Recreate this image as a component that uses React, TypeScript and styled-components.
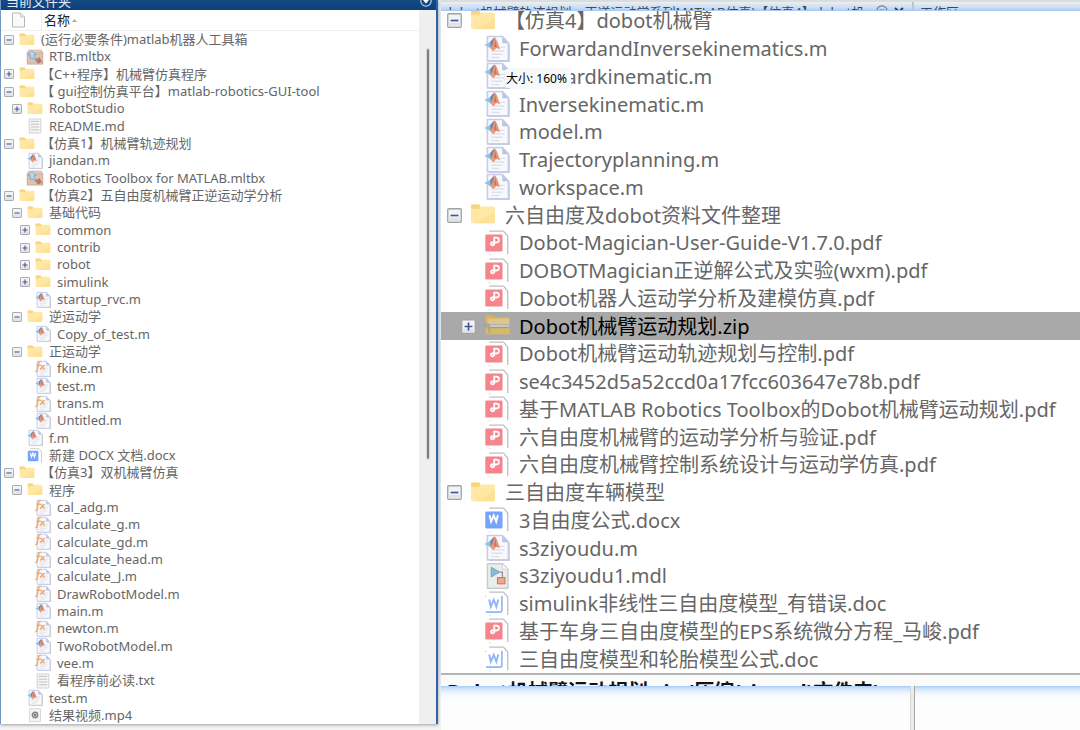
import React from "react";
import styled, { createGlobalStyle } from "styled-components";

const GlobalStyle = createGlobalStyle`
  * { box-sizing: border-box; }
  html, body { margin: 0; padding: 0; }
  body {
    font-family: "Noto Sans", "Noto Sans CJK SC", sans-serif;
    background: #fff;
    overflow: hidden;
  }
`;

type Kind = "folder" | "m" | "fx" | "mltbx" | "text" | "docx" | "doc" | "pdf" | "zip" | "mdl" | "video";
type Item = { name: string; kind: Kind; level: number; toggle?: "open" | "closed"; selected?: boolean };

const f = (name: string, level: number, toggle: "open" | "closed"): Item => ({ name, kind: "folder", level, toggle });
const i = (name: string, level: number, kind: Kind): Item => ({ name, kind, level });

const leftItems: Item[] = [
  f("(运行必要条件)matlab机器人工具箱", 0, "open"),
  i("RTB.mltbx", 1, "mltbx"),
  f("【C++程序】机械臂仿真程序", 0, "closed"),
  f("【 gui控制仿真平台】matlab-robotics-GUI-tool", 0, "open"),
  f("RobotStudio", 1, "closed"),
  i("README.md", 1, "text"),
  f("【仿真1】机械臂轨迹规划", 0, "open"),
  i("jiandan.m", 1, "m"),
  i("Robotics Toolbox for MATLAB.mltbx", 1, "mltbx"),
  f("【仿真2】五自由度机械臂正逆运动学分析", 0, "open"),
  f("基础代码", 1, "open"),
  f("common", 2, "closed"),
  f("contrib", 2, "closed"),
  f("robot", 2, "closed"),
  f("simulink", 2, "closed"),
  i("startup_rvc.m", 2, "m"),
  f("逆运动学", 1, "open"),
  i("Copy_of_test.m", 2, "m"),
  f("正运动学", 1, "open"),
  i("fkine.m", 2, "fx"),
  i("test.m", 2, "m"),
  i("trans.m", 2, "fx"),
  i("Untitled.m", 2, "m"),
  i("f.m", 1, "m"),
  i("新建 DOCX 文档.docx", 1, "docx"),
  f("【仿真3】双机械臂仿真", 0, "open"),
  f("程序", 1, "open"),
  i("cal_adg.m", 2, "fx"),
  i("calculate_g.m", 2, "fx"),
  i("calculate_gd.m", 2, "fx"),
  i("calculate_head.m", 2, "fx"),
  i("calculate_J.m", 2, "fx"),
  i("DrawRobotModel.m", 2, "fx"),
  i("main.m", 2, "m"),
  i("newton.m", 2, "fx"),
  i("TwoRobotModel.m", 2, "m"),
  i("vee.m", 2, "fx"),
  i("看程序前必读.txt", 2, "text"),
  i("test.m", 1, "m"),
  i("结果视频.mp4", 1, "video"),
];

const rightItems: Item[] = [
  f("【仿真4】dobot机械臂", 0, "open"),
  i("ForwardandInversekinematics.m", 1, "m"),
  i("Forwardkinematic.m", 1, "m"),
  i("Inversekinematic.m", 1, "m"),
  i("model.m", 1, "m"),
  i("Trajectoryplanning.m", 1, "m"),
  i("workspace.m", 1, "m"),
  f("六自由度及dobot资料文件整理", 0, "open"),
  i("Dobot-Magician-User-Guide-V1.7.0.pdf", 1, "pdf"),
  i("DOBOTMagician正逆解公式及实验(wxm).pdf", 1, "pdf"),
  i("Dobot机器人运动学分析及建模仿真.pdf", 1, "pdf"),
  { name: "Dobot机械臂运动规划.zip", kind: "zip", level: 1, toggle: "closed", selected: true },
  i("Dobot机械臂运动轨迹规划与控制.pdf", 1, "pdf"),
  i("se4c3452d5a52ccd0a17fcc603647e78b.pdf", 1, "pdf"),
  i("基于MATLAB Robotics Toolbox的Dobot机械臂运动规划.pdf", 1, "pdf"),
  i("六自由度机械臂的运动学分析与验证.pdf", 1, "pdf"),
  i("六自由度机械臂控制系统设计与运动学仿真.pdf", 1, "pdf"),
  f("三自由度车辆模型", 0, "open"),
  i("3自由度公式.docx", 1, "docx"),
  i("s3ziyoudu.m", 1, "m"),
  i("s3ziyoudu1.mdl", 1, "mdl"),
  i("simulink非线性三自由度模型_有错误.doc", 1, "doc"),
  i("基于车身三自由度模型的EPS系统微分方程_马峻.pdf", 1, "pdf"),
  i("三自由度模型和轮胎模型公式.doc", 1, "doc"),
];

const Page = styled.div`
  display: grid;
  grid-template-columns: 441px minmax(0, 1fr);
  height: 100vh;
  background: #fcfcfc;
`;

const LeftColumn = styled.div`
  display: flex;
  flex-direction: column;
  min-height: 0;
  padding: 0 3px 6px 0;
  background: linear-gradient(#e2e8f1, #dfe6f0 92%, #f3f3f3 96%);
`;

const LeftPanel = styled.section`
  flex: 1;
  min-height: 0;
  display: flex;
  flex-direction: column;
  background: #fff;
  border-left: 1px solid #7396c4;
  border-right: 2px solid #2e64a4;
  box-shadow: 0 1px 3px rgba(0, 0, 0, 0.35);
`;

const TitleBar = styled.header`
  flex: none;
  height: 10px;
  padding: 0 4px 0 5px;
  display: flex;
  align-items: flex-end;
  justify-content: space-between;
  overflow: hidden;
  color: #e3edf7;
  background: linear-gradient(#154a84, #0e4079);
`;

const Title = styled.h2`
  margin: 0;
  font-size: 13px;
  line-height: 17px;
  font-weight: 400;
`;

const PanelMenu = styled.button`
  width: 12px;
  height: 12px;
  padding: 0;
  border: 0;
  margin-bottom: 3px;
  background: none;
  svg { display: block; }
`;

const PanelBody = styled.div`
  flex: 1;
  min-height: 0;
  display: flex;
`;

const TreeColumn = styled.div`
  flex: 1;
  min-width: 0;
  display: flex;
  flex-direction: column;
`;

const HeaderRow = styled.div`
  flex: none;
  display: flex;
  align-items: center;
  height: 21px;
  border-bottom: 1px solid #f0f0f0;
`;

const HeaderIcon = styled.span`
  width: 41px;
  height: 100%;
  display: flex;
  align-items: center;
  padding-left: 10px;
  border-right: 1px solid #ededed;
`;

const SortButton = styled.button`
  padding: 0 0 0 2px;
  border: 0;
  background: none;
  font: inherit;
  font-size: 13px;
  line-height: 20px;
  color: #222;
  display: flex;
  align-items: center;
  gap: 2px;
`;

const ScrollTrack = styled.div`
  flex: none;
  width: 17px;
  padding: 39px 7px 0 8px;
  background: #efefef;
`;

const ScrollThumb = styled.div`
  width: 2px;
  height: 410px;
  max-height: 100%;
  border-radius: 1px;
  background: #7d7d7d;
  outline: 1px solid #d8d8d8;
`;

const sizes = {
  small: { font: 13, line: 17, icon: 16, toggle: 10, pad: 3, iconGap: 5, textGap: 6, indent: 8 },
  large: { font: 20, line: 27, icon: 26, toggle: 15, pad: 6, iconGap: 8, textGap: 9, indent: 14 },
};
type Size = keyof typeof sizes;

const Tree = styled.ul`
  flex: 1;
  min-height: 0;
  margin: 0;
  padding: 0;
  list-style: none;
  display: flex;
  flex-direction: column;
`;

const Row = styled.li<{ $size: Size; $level: number; $selected?: boolean }>`
  flex: 1 1 0;
  min-height: 0;
  display: flex;
  align-items: center;
  padding-left: ${(p) => sizes[p.$size].pad + p.$level * sizes[p.$size].indent}px;
  font-size: ${(p) => sizes[p.$size].font}px;
  line-height: ${(p) => sizes[p.$size].line}px;
  white-space: nowrap;
  color: ${(p) => (p.$selected ? "#000" : "#666")};
  background: ${(p) => (p.$selected ? "#a9a9a9" : "transparent")};
`;

const ToggleSlot = styled.span<{ $size: Size }>`
  flex: none;
  width: ${(p) => sizes[p.$size].toggle}px;
  height: ${(p) => sizes[p.$size].toggle}px;
  margin-right: ${(p) => sizes[p.$size].iconGap}px;
`;

const Toggle = styled.button`
  display: block;
  width: 100%;
  height: 100%;
  padding: 0;
  border: 0;
  background: none;
  svg { display: block; }
`;

const IconSlot = styled.span<{ $size: Size }>`
  flex: none;
  width: ${(p) => sizes[p.$size].icon}px;
  height: ${(p) => sizes[p.$size].icon}px;
  margin-right: ${(p) => sizes[p.$size].textGap}px;
  svg { display: block; overflow: visible; }
`;

const RightColumn = styled.div`
  display: flex;
  flex-direction: column;
  min-width: 0;
  min-height: 0;
`;

const TabStrip = styled.header`
  flex: none;
  height: 11px;
  display: grid;
  grid-template-columns: minmax(0, 1fr) 168px;
  overflow: hidden;
  border-top: 2px solid #dcdddb;
  border-bottom: 1px solid #a9cbf3;
  background: linear-gradient(#eaf0f6, #c9ddf3 70%, #b4d2f6);
  color: #3f4b58;
  font-size: 13px;
  line-height: 18px;
`;

const Tab = styled.div`
  display: flex;
  align-items: flex-start;
  padding: 1px 7px 0 3px;
  white-space: nowrap;
`;

const TabTitle = styled.span`
  flex: 1;
  min-width: 0;
`;

const TabButton = styled.button`
  width: 12px;
  height: 12px;
  margin: 2px 0 0 5px;
  padding: 0;
  border: 0;
  background: none;
  svg { display: block; }
`;

const WorkspaceTab = styled(Tab)`
  border-left: 2px solid #b9c6d4;
  padding-left: 6px;
`;

const Magnified = styled.section`
  flex: 1;
  min-height: 0;
  display: flex;
  flex-direction: column;
  position: relative;
  overflow: hidden;
  background: #fff;
`;

const TreeViewport = styled.div`
  flex: 1;
  min-height: 0;
  display: flex;
  flex-direction: column;
  margin-top: -4px;
`;

const Details = styled.footer`
  flex: none;
  height: 13px;
  overflow: hidden;
  border-top: 2px solid #b5b5b5;
  background: #fbfbfb;
  padding: 3px 0 0 6px;
  font-size: 20px;
  line-height: 27px;
  font-weight: 700;
  color: #111;
  white-space: nowrap;
`;

const SizeTip = styled.div`
  position: absolute;
  left: 64px;
  top: 58px;
  padding: 0 4px 0 1px;
  font-size: 12px;
  line-height: 19px;
  color: #000;
  background: #f8f8f8;
  border-radius: 2px;
  box-shadow: 0 0 1px #ccc;
`;

const Behind = styled.div`
  flex: none;
  height: 44px;
  display: grid;
  grid-template-columns: minmax(0, 1fr) 5px 165px;
  background: linear-gradient(#a9cdf7, #d3e6fc 3px, #f3f8fe 8px, #fdfdfd 14px);
`;

const Splitter = styled.div`
  grid-column: 2;
  background: #ebebeb;
  border-left: 1px solid #d6d6d6;
  border-right: 1px solid #a5a5a5;
`;

function ToggleIcon({ closed, size }: { closed: boolean; size: Size }) {
  const s = sizes[size].toggle;
  return (
    <svg width={s} height={s} viewBox="0 0 10 10">
      <rect x="0.5" y="0.5" width="9" height="9" rx="0.6" fill="#f3f3f3" stroke="#a3a3a3" strokeWidth="0.9" />
      <path d="M1 9V6.5h8V9z" fill="#e3e3e3" />
      <path d={closed ? "M2.4 5h5.2M5 2.4v5.2" : "M2.4 5h5.2"} stroke="#3a55a4" strokeWidth="1.1" fill="none" />
    </svg>
  );
}

function SheetCorner() {
  return (
    <>
      <path d="M3.2 0.7h8.8l2.6 3v11" fill="none" stroke="#c0c0c0" strokeWidth="0.8" />
      <circle cx="3.6" cy="15.2" r="0.4" fill="#c8c8c8" />
    </>
  );
}

function CodeSheet() {
  return (
    <>
      <path d="M3.2 1.2h9l3.7 3.9v10.9H3.2z" fill="#cfcbc8" />
      <path d="M2.1 0.3h9.2l3.7 3.9v11.1H2.1z" fill="#f7f9fd" stroke="#c5cde8" strokeWidth="1" />
      <path d="M11.2 0.3v4.1H15z" fill="#bcc4e4" />
      <path d="M8 7h5M4.5 9.2h8M4.5 11.2h7M4.5 13.2h5" stroke="#dfe1e8" strokeWidth="0.9" />
    </>
  );
}

function FileIcon({ kind, size }: { kind: Kind; size: Size }) {
  const s = sizes[size].icon;
  return (
    <svg width={s} height={s} viewBox="0 0 16 16" aria-hidden="true">
      {kind === "folder" && (
        <>
          <path d="M0.6 2.2q0-.7.7-.7h4q.5 0 .7.5l.5.9H1z" fill="#f8cf6c" />
          <path d="M0.6 2.7h14q.7 0 .7.7v8.9q0 .7-.7.7H1.3q-.7 0-.7-.7z" fill="#ffe7a6" />
          <path d="M0.6 2.2h5.4v2H0.6z" fill="#fad57c" />
          <path d="M15.3 6v6.3q0 .7-.7.7H4z" fill="#ffdd8d" opacity=".65" />
        </>
      )}
      {kind === "zip" && (
        <>
          <path d="M1 1.4h5l1 1.1h8.6v3.6H1z" fill="#d6b35a" />
          <path d="M2 3.4h13.6v3.4H2z" fill="#dfc588" />
          <path d="M1 9.3h14.6v3.8H1z" fill="#d9b964" />
          <path d="M1 7.2h14.6v1.6H4" fill="#c8c8c4" />
          <path d="M0.4 9q0-1.9 1.5-1.9h1.3v5" fill="none" stroke="#a5a49c" strokeWidth="1.1" />
          <path d="M4 9h11.6" stroke="#a09a86" strokeWidth="0.6" />
        </>
      )}
      {kind === "m" && (
        <>
          <CodeSheet />
          <path d="M0.2 5.5L4 3.6l1 .8-1 3.2z" fill="#93c3e3" />
          <path d="M3.8 3.6l2.6-2.8L5.8 6 4 7.2z" fill="#7488ad" />
          <path d="M3.8 7.6Q5.6 5.4 6.6.8q1.2.5 3.2 7.4L7.6 7.4 5.8 9.4z" fill="#e9997c" />
          <path d="M6.6 0.8q.5 3-.4 5.8l1.7.4z" fill="#cf6f56" />
        </>
      )}
      {kind === "fx" && (
        <>
          <CodeSheet />
          <path d="M5.8 .5Q4 0 3.5 2.4L2.2 9Q1.8 11 .3 10.5M1.6 4.2h3.8" fill="none" stroke="#ecaa74" strokeWidth="1.5" />
          <path d="M5.3 4.6q1.6-.6 2.2 1.4t2.2 1.9M9.8 4.3L5 8.4" fill="none" stroke="#ecaa74" strokeWidth="1.5" />
        </>
      )}
      {kind === "mltbx" && (
        <>
          <path d="M1.4 .7h13.2l1.6 3.2v11.6H-.2V3.9z" fill="#c9a791" />
          <path d="M.6 4.3h14.8v10.4H.6z" fill="#dcc2b0" />
          <path d="M1.6 1.2h12.8l1 2.4H.6z" fill="#e3cdbd" />
          <path d="M5 1.6l4 4H7.2v3.8H3.2V5.6H1z" fill="#b4d9f2" stroke="#6f9cbd" strokeWidth=".7" />
          <path d="M7.2 10.8l2.6-2 1.2.8-1.2 3z" fill="#6598bf" />
          <path d="M9.4 12.7q1.6-1.2 2.6-5 1.2.7 3.2 6l-2-.7-1.7 1.7z" fill="#ca6f55" />
        </>
      )}
      {kind === "text" && (
        <>
          <path d="M2.2 1h11.6v14H2.2z" fill="#f6f6f6" stroke="#cdcdcd" strokeWidth=".9" />
          <path d="M3.8 3.4h8.4M3.8 6.2h8.4M3.8 9h8.4M3.8 11.8h8.4" stroke="#bcbcbc" strokeWidth=".9" />
        </>
      )}
      {kind === "video" && (
        <>
          <path d="M2.5 1.7h11v12.8h-11z" fill="#f5f5f5" stroke="#d0d0d0" strokeWidth=".8" />
          <circle cx="8" cy="8" r="2.7" fill="#c7c0c3" stroke="#85858b" strokeWidth="1.4" />
          <circle cx="8" cy="8" r="1" fill="#915f63" />
        </>
      )}
      {kind === "pdf" && (
        <>
          <SheetCorner />
          <rect x="0.8" y="2.8" width="10.6" height="10.4" rx=".8" fill="#f5848c" />
          <path d="M6.3 9V4.7h1.4a1.5 1.5 0 010 3H4.6a1 1 0 101.6 1.1" fill="none" stroke="#fff" strokeWidth="1.1" />
        </>
      )}
      {kind === "docx" && (
        <>
          <SheetCorner />
          <rect x="0.8" y="2.8" width="10.6" height="10.4" rx=".8" fill="#75a4fa" />
          <path d="M3.4 5l1 4L6 5.2l1.5 3.8 1.1-4" fill="none" stroke="#fff" strokeWidth="1.2" />
        </>
      )}
      {kind === "doc" && (
        <>
          <SheetCorner />
          <path d="M11 3v9.2q0 .8-.8.8H1.2" fill="none" stroke="#8fb6f8" strokeWidth="1" />
          <circle cx="1" cy="3.3" r=".4" fill="#9dbff8" />
          <path d="M3.2 5.2L4.2 9.6 6 5.4l1.6 4.2L8.8 5.2" fill="none" stroke="#8fb6f8" strokeWidth="1.2" />
        </>
      )}
      {kind === "mdl" && (
        <>
          <path d="M2.1.4h9.3l3.3 3.4v11.8H2.1z" fill="#eceeee" stroke="#c9cccc" strokeWidth=".9" />
          <path d="M11.4.4v3.4h3.3z" fill="#fff" stroke="#cacaca" strokeWidth=".5" />
          <path d="M4.4 2.6l5.4 3-5.4 3z" fill="#8abbd8" stroke="#6c9dbb" strokeWidth=".5" />
          <path d="M10 5.6h1.3v3.6" fill="none" stroke="#888" strokeWidth=".7" />
          <rect x="8.3" y="9" width="4.6" height="3.8" fill="#efa78c" stroke="#d0795f" strokeWidth=".7" />
        </>
      )}
    </svg>
  );
}

function FileTree({ items, size, label }: { items: Item[]; size: Size; label: string }) {
  return (
    <Tree role="tree" aria-label={label}>
      {items.map((item, n) => (
        <Row
          key={n}
          role="treeitem"
          aria-level={item.level + 1}
          aria-selected={!!item.selected}
          $size={size}
          $level={item.level}
          $selected={item.selected}
        >
          <ToggleSlot $size={size}>
            {item.toggle && (
              <Toggle type="button" aria-label={item.name} aria-expanded={item.toggle === "open"}>
                <ToggleIcon closed={item.toggle === "closed"} size={size} />
              </Toggle>
            )}
          </ToggleSlot>
          <IconSlot $size={size}>
            <FileIcon kind={item.kind} size={size} />
          </IconSlot>
          <span>{item.name}</span>
        </Row>
      ))}
    </Tree>
  );
}

export default function App() {
  return (
    <>
      <GlobalStyle />
      <Page>
        <LeftColumn>
          <LeftPanel>
            <TitleBar>
              <Title>当前文件夹</Title>
              <PanelMenu type="button" aria-label="面板菜单">
                <svg width="12" height="12" viewBox="0 0 12 12">
                  <circle cx="6" cy="6" r="5.2" fill="none" stroke="#b9cce0" strokeWidth="1.2" />
                  <path d="M3 5h6L6 8.6z" fill="#fff" />
                </svg>
              </PanelMenu>
            </TitleBar>
            <PanelBody>
              <TreeColumn>
                <HeaderRow>
                  <HeaderIcon>
                    <svg width="15" height="16" viewBox="0 0 15 16">
                      <path d="M1.5 1h8l4 4v10h-12z" fill="#fafafa" stroke="#b8b8b8" />
                      <path d="M9.5 1v4h4" fill="#e8e8e8" stroke="#c0c0c0" strokeWidth=".8" />
                    </svg>
                  </HeaderIcon>
                  <SortButton type="button">
                    名称
                    <svg width="5" height="3" viewBox="0 0 5 3">
                      <path d="M0 3L2.5 0 5 3z" fill="#a8a89a" />
                    </svg>
                  </SortButton>
                </HeaderRow>
                <FileTree items={leftItems} size="small" label="当前文件夹" />
              </TreeColumn>
              <ScrollTrack>
                <ScrollThumb />
              </ScrollTrack>
            </PanelBody>
          </LeftPanel>
        </LeftColumn>
        <RightColumn>
          <TabStrip>
            <Tab>
              <TabTitle>dobot机械臂轨迹规划—正逆运动学系列MATLAB仿真)【仿真4】dobot机...</TabTitle>
              <TabButton type="button" aria-label="菜单">
                <svg width="12" height="12" viewBox="0 0 12 12">
                  <circle cx="6" cy="6" r="5.2" fill="none" stroke="#6f7a86" strokeWidth="1.2" />
                  <path d="M3 4.5h6L6 8z" fill="#6f7a86" />
                </svg>
              </TabButton>
              <TabButton type="button" aria-label="关闭">
                <svg width="12" height="12" viewBox="0 0 12 12">
                  <path d="M2 3l8 7M10 3l-8 7" stroke="#2d3742" strokeWidth="1.8" />
                </svg>
              </TabButton>
            </Tab>
            <WorkspaceTab>工作区</WorkspaceTab>
          </TabStrip>
          <Magnified>
            <TreeViewport>
              <FileTree items={rightItems} size="large" label="放大视图" />
            </TreeViewport>
            <Details>Dobot机械臂运动规划.zip (压缩(zipped)文件夹)</Details>
            <SizeTip role="tooltip">大小: 160%</SizeTip>
          </Magnified>
          <Behind>
            <Splitter />
          </Behind>
        </RightColumn>
      </Page>
    </>
  );
}
